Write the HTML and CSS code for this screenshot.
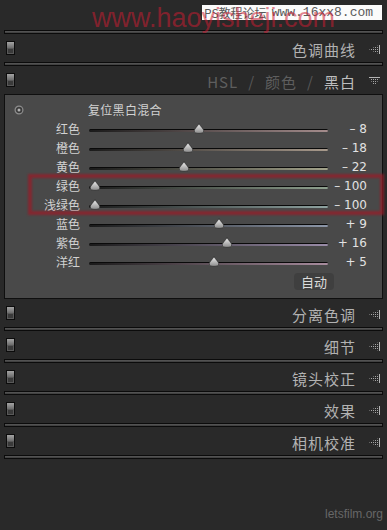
FILE: index.html
```html
<!DOCTYPE html>
<html lang="zh">
<head>
<meta charset="utf-8">
<title>黑白混合</title>
<link rel="stylesheet" href="styles.css">
</head>
<body>
<svg class="defs" aria-hidden="true">
  <defs>
    <pattern id="dots" width="2" height="2" patternUnits="userSpaceOnUse">
      <rect x="0" y="0" width="1" height="1" fill="#a8a8a8"/>
    </pattern>
    <linearGradient id="tg" x1="0" y1="0" x2="0" y2="1">
      <stop offset="0" stop-color="#f2f2f2"/>
      <stop offset="1" stop-color="#8a8a8a"/>
    </linearGradient>
    <linearGradient id="sq" x1="0" y1="0" x2="0" y2="1">
      <stop offset="0" stop-color="#a4a4a4"/>
      <stop offset="1" stop-color="#6c6c6c"/>
    </linearGradient>
    <symbol id="sw" viewBox="0 0 9 14">
      <rect x="0.5" y="0.5" width="8" height="13" fill="#1c1c1c" stroke="#0c0c0c"/>
      <rect x="1" y="1" width="7" height="6" fill="url(#sq)"/>
      <rect x="1.5" y="7.5" width="6" height="5" fill="#3a3a3a" stroke="#595959"/>
    </symbol>
    <symbol id="tl" viewBox="0 0 11 9">
      <polygon points="10,0 10,9 0,4.5" fill="url(#dots)"/>
      <rect x="10" y="0" width="1" height="9" fill="#b4b4b4"/>
    </symbol>
    <symbol id="td" viewBox="0 0 11 9">
      <polygon points="0,1 11,1 5.5,9" fill="url(#dots)"/>
      <rect x="0" y="0" width="11" height="1" fill="#b4b4b4"/>
    </symbol>
    <symbol id="th" viewBox="0 0 10 10">
      <path d="M5 0.6 C6 2.6 9.4 5.4 9.4 7.2 C9.4 8.9 7.4 9.4 5 9.4 C2.6 9.4 0.6 8.9 0.6 7.2 C0.6 5.4 4 2.6 5 0.6Z" fill="url(#tg)" stroke="#2a2a2a" stroke-width="0.6"/>
    </symbol>
  </defs>
</svg>

<div class="top">
  <div class="stamp"><span class="stamp-cn">PS教程论坛</span><span class="stamp-url">www.16xx8.com</span></div>
  <div class="wm">www.haoyisheji.com</div>
</div>

<div class="sep"></div>
<div class="hdr">
  <svg class="sw"><use href="#sw"/></svg>
  <span class="title">色调曲线</span>
  <svg class="tri"><use href="#tl"/></svg>
</div>
<div class="sep"></div>
<div class="hdr">
  <svg class="sw"><use href="#sw"/></svg>
  <span class="title tabs"><span class="dim">HSL</span><span class="slash">/</span><span class="dim">颜色</span><span class="slash">/</span><span class="on">黑白</span></span>
  <svg class="tri"><use href="#td"/></svg>
</div>

<div class="panel">
  <div class="reset">
    <svg class="target" viewBox="0 0 10 10"><circle cx="5" cy="5" r="3.9" fill="#3b3b3b" stroke="#8e8e8e" stroke-width="1.2"/><circle cx="5" cy="5" r="1.5" fill="#b4b4b4"/></svg>
    <span class="reset-txt">复位黑白混合</span>
  </div>
  <div class="row"><span class="lbl">红色</span><div class="track t-red"><svg class="thumb" style="--p:0.46"><use href="#th"/></svg></div><span class="val">– 8</span></div>
  <div class="row"><span class="lbl">橙色</span><div class="track t-orange"><svg class="thumb" style="--p:0.41"><use href="#th"/></svg></div><span class="val">– 18</span></div>
  <div class="row"><span class="lbl">黄色</span><div class="track t-yellow"><svg class="thumb" style="--p:0.39"><use href="#th"/></svg></div><span class="val">– 22</span></div>
  <div class="row"><span class="lbl">绿色</span><div class="track t-green"><svg class="thumb" style="--p:0"><use href="#th"/></svg></div><span class="val">– 100</span></div>
  <div class="row"><span class="lbl">浅绿色</span><div class="track t-aqua"><svg class="thumb" style="--p:0"><use href="#th"/></svg></div><span class="val">– 100</span></div>
  <div class="row"><span class="lbl">蓝色</span><div class="track t-blue"><svg class="thumb" style="--p:0.545"><use href="#th"/></svg></div><span class="val">+ 9</span></div>
  <div class="row"><span class="lbl">紫色</span><div class="track t-purple"><svg class="thumb" style="--p:0.58"><use href="#th"/></svg></div><span class="val">+ 16</span></div>
  <div class="row"><span class="lbl">洋红</span><div class="track t-magenta"><svg class="thumb" style="--p:0.525"><use href="#th"/></svg></div><span class="val">+ 5</span></div>
  <div class="auto"><span class="btn">自动</span></div>
  <div class="mark"></div>
</div>

<div class="hdr">
  <svg class="sw"><use href="#sw"/></svg>
  <span class="title">分离色调</span>
  <svg class="tri"><use href="#tl"/></svg>
</div>
<div class="sep"></div>
<div class="hdr">
  <svg class="sw"><use href="#sw"/></svg>
  <span class="title">细节</span>
  <svg class="tri"><use href="#tl"/></svg>
</div>
<div class="sep"></div>
<div class="hdr">
  <svg class="sw"><use href="#sw"/></svg>
  <span class="title">镜头校正</span>
  <svg class="tri"><use href="#tl"/></svg>
</div>
<div class="sep"></div>
<div class="hdr">
  <svg class="sw"><use href="#sw"/></svg>
  <span class="title">效果</span>
  <svg class="tri"><use href="#tl"/></svg>
</div>
<div class="sep"></div>
<div class="hdr">
  <svg class="sw"><use href="#sw"/></svg>
  <span class="title">相机校准</span>
  <svg class="tri"><use href="#tl"/></svg>
</div>
<div class="sep"></div>

<div class="footer">letsfilm.org</div>
</body>
</html>
```
FILE: styles.css
```css
html, body {
  margin: 0;
  padding: 0;
}
body {
  width: 387px;
  height: 530px;
  overflow: hidden;
  background: #292929;
  display: flex;
  flex-direction: column;
  font-family: "Noto Sans CJK SC", "Noto Sans", sans-serif;
  color: #b4b4b4;
}
.defs {
  position: absolute;
  width: 0;
  height: 0;
  overflow: hidden;
}

/* top watermark strip */
.top {
  height: 30px;
  flex: none;
  position: relative;
}
.stamp {
  position: absolute;
  left: 202px;
  top: 5px;
  width: 180px;
  height: 15px;
  background: #fbfbfb;
  display: flex;
  align-items: center;
  padding-left: 2px;
  box-sizing: border-box;
  color: #5a5a5a;
  white-space: nowrap;
}
.stamp-cn {
  font-size: 12px;
  line-height: 15px;
}
.stamp-url {
  font-family: "Liberation Mono", "DejaVu Sans Mono", monospace;
  font-size: 13px;
  line-height: 15px;
  margin-left: 5px;
}
.wm {
  position: absolute;
  left: 92px;
  top: 5px;
  font-family: "Liberation Sans", Arial, sans-serif;
  font-size: 27px;
  line-height: 27px;
  color: rgba(205, 28, 50, 0.55);
  white-space: nowrap;
}

/* separators & headers */
.sep {
  flex: none;
  height: 4px;
  margin: 0 4px;
  box-sizing: border-box;
  border: 1px solid #0b0b0b;
  background: linear-gradient(#5a5a5a, #3a3a3a);
}
.hdr {
  flex: none;
  height: 28px;
  box-sizing: border-box;
  padding: 3px 7px 0 6px;
  display: flex;
  align-items: center;
}
.sw {
  width: 9px;
  height: 14px;
  flex: none;
  margin-top: -3px;
}
.title {
  margin-left: auto;
  margin-right: 13px;
  font-size: 15px;
  letter-spacing: 1px;
  line-height: 20px;
  color: #b2b2b2;
  white-space: nowrap;
}
.tabs {
  display: flex;
  align-items: center;
}
.tabs .dim {
  color: #5e5e5e;
}
.tabs .slash {
  color: #585858;
  margin: 0 10px;
}
.tabs .on {
  color: #bdbdbd;
}
.tri {
  width: 11px;
  height: 9px;
  flex: none;
}

/* expanded panel */
.panel {
  flex: none;
  position: relative;
  height: 205px;
  box-sizing: border-box;
  margin: 0 4px;
  border: 1px solid #0f0f0f;
  background: #494949;
  padding-top: 5px;
}
.reset {
  height: 19px;
  display: flex;
  align-items: center;
  padding-left: 9px;
}
.target {
  width: 10px;
  height: 10px;
  flex: none;
}
.reset-txt {
  margin-left: 64px;
  font-size: 12px;
  letter-spacing: 0.3px;
  color: #d2d2d2;
}
.row {
  height: 19px;
  display: flex;
  align-items: center;
}
.lbl {
  width: 75px;
  text-align: right;
  font-size: 12px;
  color: #d2d2d2;
  flex: none;
}
.track {
  position: relative;
  width: 239px;
  height: 3px;
  margin-left: 9px;
  margin-top: 3px;
  flex: none;
  box-sizing: border-box;
  border-top: 1px solid #0a0a0a;
  border-radius: 2px;
}
.thumb {
  position: absolute;
  width: 11px;
  height: 11px;
  top: -7px;
  left: calc(6px + var(--p) * (100% - 12px));
  transform: translateX(-50%);
}
.t-red { background: linear-gradient(to right, #1a1a1a, #a48c8c); }
.t-orange { background: linear-gradient(to right, #1a1a1a, #a89a8c); }
.t-yellow { background: linear-gradient(to right, #1a1a1a, #a2a28a); }
.t-green { background: linear-gradient(to right, #1a1a1a, #8ea08e); }
.t-aqua { background: linear-gradient(to right, #1a1a1a, #8ea2a0); }
.t-blue { background: linear-gradient(to right, #1a1a1a, #8c96a8); }
.t-purple { background: linear-gradient(to right, #1a1a1a, #9a8ca8); }
.t-magenta { background: linear-gradient(to right, #1a1a1a, #a88c9e); }
.val {
  width: 39px;
  text-align: right;
  font-family: "DejaVu Sans", sans-serif;
  font-size: 12px;
  color: #e2e2e2;
  flex: none;
  white-space: nowrap;
}
.auto {
  display: flex;
  justify-content: flex-end;
  padding-right: 48px;
  margin-top: 2px;
}
.btn {
  width: 40px;
  height: 17px;
  line-height: 17px;
  text-align: center;
  font-size: 13px;
  color: #dcdcdc;
  background: #3f3f3f;
  border-radius: 4px;
}
.mark {
  position: absolute;
  left: 23px;
  top: 79px;
  width: 356px;
  height: 41px;
  box-sizing: border-box;
  border: 4px solid rgba(150, 28, 40, 0.75);
  filter: blur(1px);
}

.footer {
  margin-top: auto;
  text-align: right;
  padding: 0 4px 9px 0;
  font-family: "Liberation Sans", Arial, sans-serif;
  font-size: 12px;
  color: #676767;
}
```
